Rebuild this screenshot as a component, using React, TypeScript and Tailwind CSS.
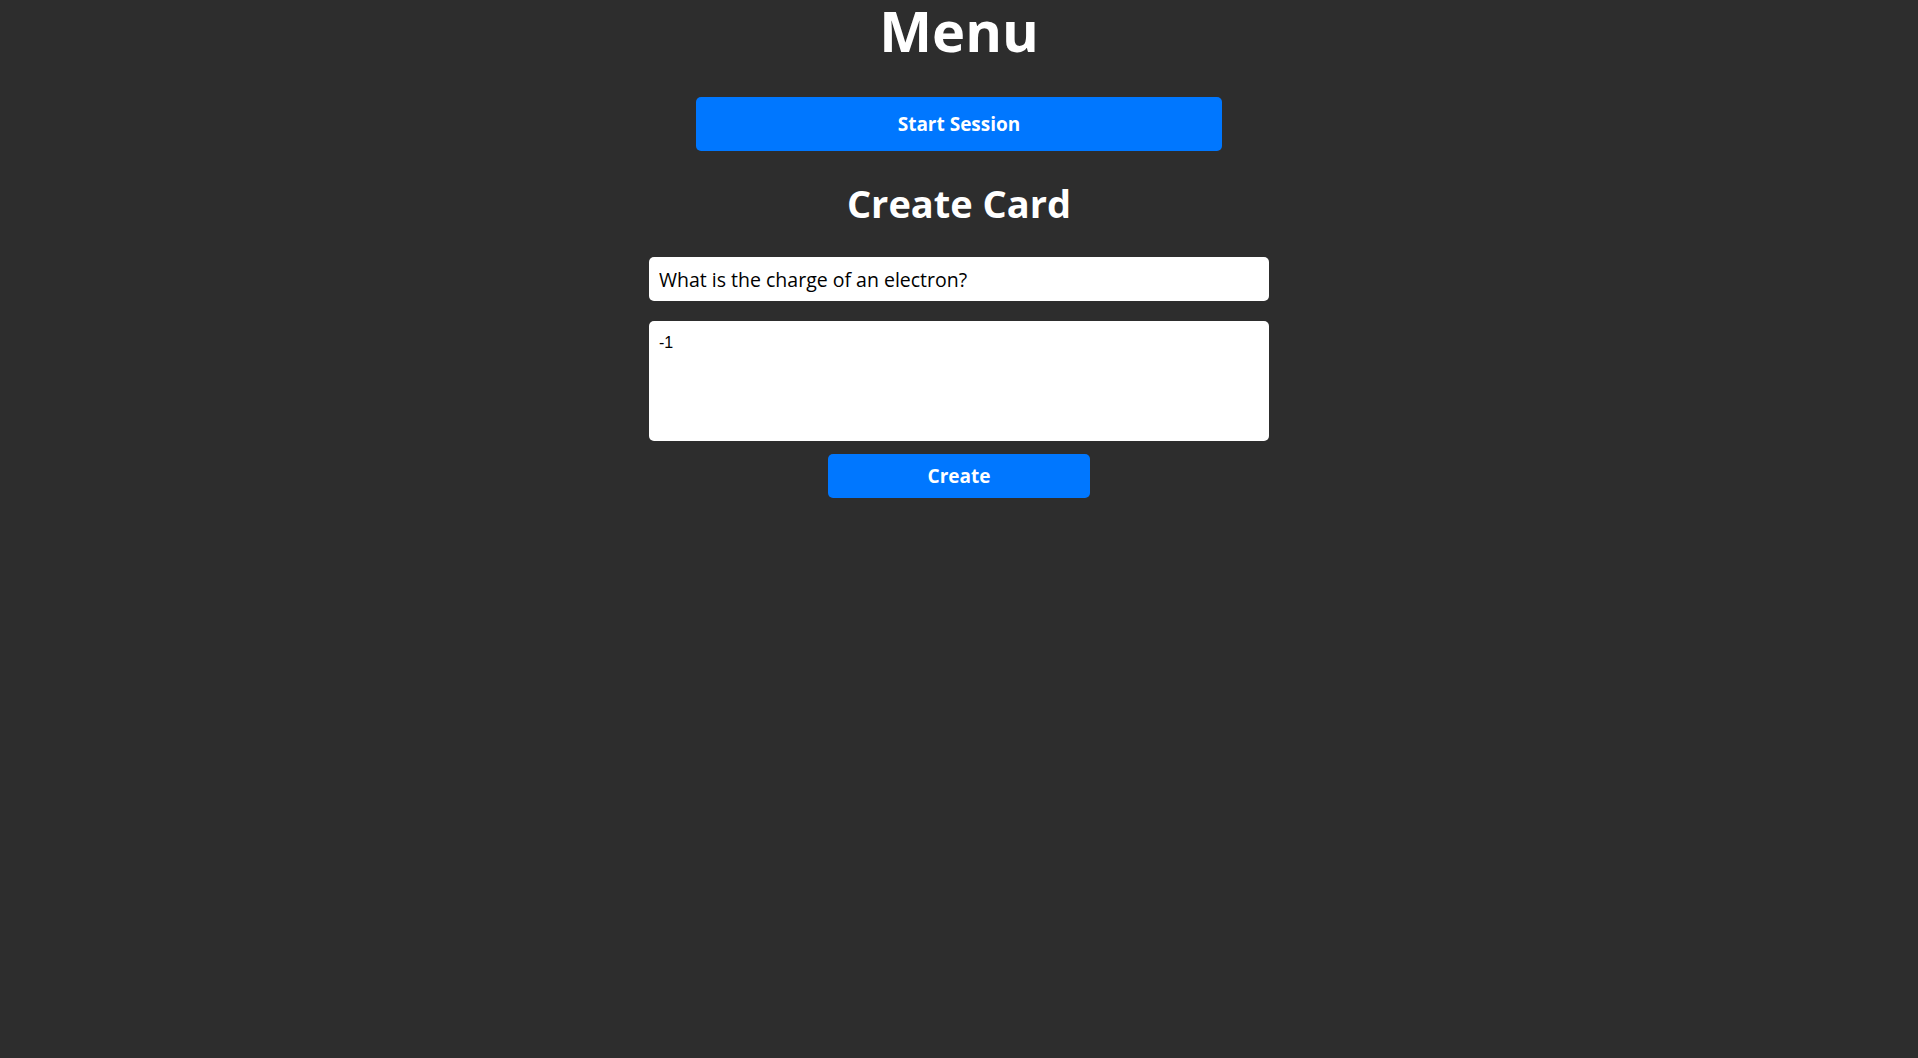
export default function App() {
  return (
    <div className="min-h-screen bg-[#2d2d2d] font-['Open_Sans',sans-serif] text-white">
      <div className="flex flex-col items-center">
        <h1 className="text-[56px] leading-[60px] font-bold">Menu</h1>
        <button className="mt-[37px] h-[54px] w-[526px] rounded-[5px] bg-[#0077ff] text-[19px] font-bold text-white">
          Start Session
        </button>
        <h2 className="mt-[28px] text-[38px] leading-[48px] font-bold">Create Card</h2>
        <form className="mt-[30px] flex flex-col items-center">
          <input
            type="text"
            defaultValue="What is the charge of an electron?"
            className="h-[44px] w-[620px] rounded-[5px] bg-white px-[10px] text-[19.5px] text-black outline-none"
          />
          <textarea
            defaultValue="-1"
            className="mt-[20px] h-[120px] w-[620px] resize-none rounded-[5px] bg-white px-[10px] py-[10px] font-['Liberation_Sans',sans-serif] text-[16px] text-black outline-none"
          />
          <button
            type="button"
            className="mt-[13px] h-[44px] w-[262px] rounded-[5px] bg-[#0077ff] text-[19px] font-bold text-white"
          >
            Create
          </button>
        </form>
      </div>
    </div>
  );
}
